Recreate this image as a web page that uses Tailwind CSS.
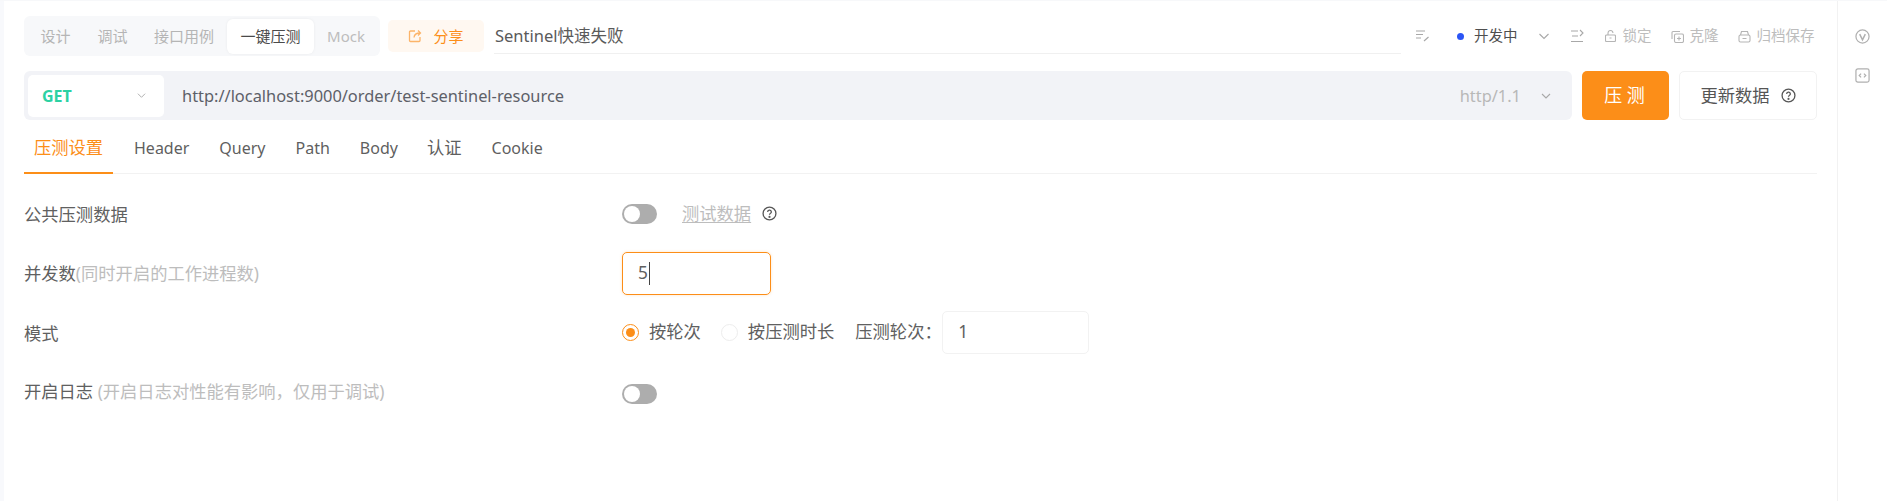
<!DOCTYPE html>
<html lang="zh">
<head>
<meta charset="utf-8">
<script src="https://cdn.jsdelivr.net/npm/@tailwindcss/browser@4"></script>
</head>
<body class="m-0 bg-white overflow-hidden font-['Noto_Sans','Noto_Sans_CJK_SC',sans-serif] text-[17.300px] text-[#606060]">
<div class="flex h-[501px] w-[1887px] border-t border-[#f7f8fa]">
  <div class="w-[4px] bg-[#f8f9fc]"></div>
  <main class="w-[1833px] pl-[20px] pr-[20px] pt-[15px]">
    <div class="flex h-[40px] items-center">
      <div class="flex h-[40px] w-[356px] items-center rounded-[6px] bg-[#f7f8fa] pl-[3px] text-[15px] text-[#b5b5b5]">
        <span class="w-[57px] text-center">设计</span>
        <span class="w-[57px] text-center">调试</span>
        <span class="w-[86px] text-center">接口用例</span>
        <span class="flex h-[35px] w-[87px] items-center justify-center rounded-[6px] bg-white text-[#4a4a4a] shadow-[0_0_3px_rgba(0,0,0,0.06)]">一键压测</span>
        <span class="w-[64px] text-center text-[#bdbdbd]">Mock</span>
      </div>
      <div class="ml-[8px] flex h-[32px] w-[96px] items-center justify-center gap-[11px] rounded-[5px] bg-[#fff8f1] text-[15px] text-[#fc8e18]">
        <svg class="h-[14px] w-[14px]" viewBox="0 0 14 14" fill="none" stroke="#fcb469" stroke-width="1.300"><path d="M7 2H2.500a1 1 0 0 0-1 1v8.500a1 1 0 0 0 1 1h8.500a1 1 0 0 0 1-1V8"/><path d="M6 8.500c.3-3 2-4.500 6-4.500M10 1.500 12.500 4 10 6.500"/></svg>
        <span>分享</span>
      </div>
      <div class="ml-[10px] flex h-[35px] w-[907px] items-center border-b border-[#f0f0f0] pl-[1px] pt-[2px] text-[16.500px] text-[#5a5a5a]">Sentinel快速失败</div>
      <div class="flex flex-1 items-center pl-[14px] text-[14.500px] text-[#bdbdbd]">
        <svg class="h-[14px] w-[15px]" viewBox="0 0 15 14" fill="none" stroke="#a8a8a8" stroke-width="1.200"><path d="M1 2h9M1 5.500h7M1 9h5M9 12l4.500-4"/></svg>
        <span class="ml-[27px] h-[7px] w-[7px] rounded-full bg-[#2b55f5]"></span>
        <span class="ml-[10px] text-[#4f4f4f]">开发中</span>
        <svg class="ml-[21px] h-[10px] w-[10px]" viewBox="0 0 10 10" fill="none" stroke="#a8a8a8" stroke-width="1.100"><path d="M.5 3 5 7.500 9.500 3"/></svg>
        <svg class="ml-[21px] h-[14px] w-[14px]" viewBox="0 0 14 14" fill="none" stroke="#a8a8a8" stroke-width="1.100"><path d="M1 2h7M2 7h6M1 12.500h12M10 1l3 3-3 3"/></svg>
        <svg class="ml-[21px] h-[12px] w-[11px]" viewBox="0 0 11 12" fill="none" stroke="#b5b5b5" stroke-width="1.100"><rect x=".5" y="5" width="10" height="6.500" rx="1"/><path d="M3 5V3a2.500 2.500 0 0 1 5 0M4.500 8h2"/></svg>
        <span class="ml-[7px]">锁定</span>
        <svg class="ml-[19px] h-[13px] w-[13px]" viewBox="0 0 13 13" fill="none" stroke="#b5b5b5" stroke-width="1.100"><path d="M9 1.500H2a1 1 0 0 0-1 1V9"/><rect x="3.500" y="4" width="9" height="8.500" rx="1.500"/><path d="M8 6.500v4M6 8.500h4"/></svg>
        <span class="ml-[6px]">克隆</span>
        <svg class="ml-[19px] h-[13px] w-[13px]" viewBox="0 0 13 13" fill="none" stroke="#b5b5b5" stroke-width="1.100"><rect x="1" y="5" width="11" height="7" rx="1.500"/><path d="M2.500 5l1-3.500h6l1 3.500M4.500 8.500h4"/></svg>
        <span class="ml-[6px]">归档保存</span>
      </div>
    </div>
    <div class="mt-[15px] flex h-[49px] items-center">
      <div class="flex h-[49px] w-[1548px] items-center rounded-[6px] bg-[#f2f3f7] pl-[4px] pr-[21px] text-[16.400px]">
        <div class="flex h-[42px] w-[136px] items-center justify-between rounded-[5px] bg-white pl-[14px] pr-[18px]">
          <span class="pt-px text-[16px] font-bold text-[#2cd1a3]">GET</span>
          <svg class="h-[9px] w-[9px]" viewBox="0 0 10 10" fill="none" stroke="#b0b0b0" stroke-width="1.100"><path d="M1 3l4 4 4-4"/></svg>
        </div>
        <span class="ml-[18px] flex-1 pt-[2px] text-[#5d6068]">http://localhost:9000/order/test-sentinel-resource</span>
        <span class="pt-[2px] text-[#b8b8b8]">http/1.1</span>
        <svg class="ml-[20px] h-[10px] w-[10px]" viewBox="0 0 10 10" fill="none" stroke="#a8a8a8" stroke-width="1.100"><path d="M1 3l4 4 4-4"/></svg>
      </div>
      <button class="ml-[10px] h-[49px] w-[87px] rounded-[5px] bg-[#fc8e18] pr-[2px] text-[18px] text-white">压 测</button>
      <div class="ml-[10px] flex h-[49px] w-[138px] items-center justify-center gap-[11px] rounded-[5px] border border-[#f2f2f2] text-[#555]">
        <span>更新数据</span>
        <svg class="h-[15px] w-[15px]" viewBox="0 0 14 14" fill="none" stroke="#555" stroke-width="1.200"><circle cx="7" cy="7" r="6"/><path d="M5.300 5.500a1.700 1.700 0 1 1 2.500 1.500c-.6.300-.8.600-.8 1.200"/><circle cx="7" cy="10.200" r=".4" fill="#555"/></svg>
      </div>
    </div>
    <div class="flex h-[54px] items-center gap-[30px] border-b border-[#f2f2f2] text-[16px] text-[#5f5f5f]">
      <span class="relative flex h-[53px] w-[89px] items-center justify-center pt-[2px] text-[17.300px] text-[#fc8e18]">压测设置<span class="absolute -bottom-px left-0 right-0 h-[2px] bg-[#fc8e18]"></span></span>
      <span class="-ml-[9px] pt-[2px]">Header</span>
      <span class="pt-[2px]">Query</span>
      <span class="pt-[2px]">Path</span>
      <span class="pt-[2px]">Body</span>
      <span class="-ml-px pt-[2px] text-[17.300px]">认证</span>
      <span class="pt-[2px]">Cookie</span>
    </div>
    <div class="mt-[10px]">
      <div class="flex h-[60px] items-center">
        <div class="w-[598px] pt-[2px]">公共压测数据</div>
        <span class="relative h-[20px] w-[35px] rounded-full bg-[#adadad]"><span class="absolute left-[2px] top-[2px] h-[16px] w-[16px] rounded-full bg-white"></span></span>
        <span class="ml-[25px] text-[#bdbdbd] underline underline-offset-2">测试数据</span>
        <svg class="ml-[11px] mb-[1px] h-[15px] w-[15px]" viewBox="0 0 14 14" fill="none" stroke="#555" stroke-width="1.200"><circle cx="7" cy="7" r="6"/><path d="M5.300 5.500a1.700 1.700 0 1 1 2.500 1.500c-.6.300-.8.600-.8 1.200"/><circle cx="7" cy="10.200" r=".4" fill="#555"/></svg>
      </div>
      <div class="flex h-[58px] items-center">
        <div class="w-[598px] pt-[2px]">并发数<span class="text-[#bdbdbd]">(同时开启的工作进程数)</span></div>
        <div class="flex h-[43px] w-[149px] items-center rounded-[5px] border border-[#fc8e18] pl-[15px] shadow-[0_0_3px_rgba(252,142,24,0.25)]">5<span class="ml-px h-[23px] w-px bg-[#444]"></span></div>
      </div>
      <div class="flex h-[60px] items-center">
        <div class="w-[598px] pt-[3px]">模式</div>
        <span class="flex h-[17px] w-[17px] items-center justify-center rounded-full border border-[#fc8e18]"><span class="h-[9px] w-[9px] rounded-full bg-[#fc8e18]"></span></span>
        <span class="ml-[10px]">按轮次</span>
        <span class="ml-[20px] h-[17px] w-[17px] rounded-full border border-[#ededed]"></span>
        <span class="ml-[10px]">按压测时长</span>
        <span class="ml-[21px] w-[87px] whitespace-nowrap">压测轮次：</span>
        <div class="flex h-[43px] w-[147px] items-center rounded-[5px] border border-[#f2f2f2] pl-[15px]">1</div>
      </div>
      <div class="flex h-[64px] items-center">
        <div class="w-[598px] pb-[4px]">开启日志 <span class="text-[#bdbdbd]">(开启日志对性能有影响，仅用于调试)</span></div>
        <span class="relative h-[20px] w-[35px] rounded-full bg-[#adadad]"><span class="absolute left-[2px] top-[2px] h-[16px] w-[16px] rounded-full bg-white"></span></span>
      </div>
    </div>
  </main>
  <aside class="flex w-[50px] flex-col items-center gap-[24px] border-l border-[#f2f2f2] pt-[28px]">
    <svg class="h-[15px] w-[15px]" viewBox="0 0 16 16" fill="none" stroke="#b0b0b0" stroke-width="1.300"><circle cx="8" cy="8" r="7"/><path d="M5 5.500l3 6 3-6" stroke-width="1.600"/></svg>
    <svg class="h-[15px] w-[15px]" viewBox="0 0 16 16" fill="none" stroke="#b0b0b0" stroke-width="1.300"><rect x="1" y="1" width="14" height="14" rx="2"/><path d="M6.500 6 4.500 8l2 2M9.500 6l2 2-2 2"/></svg>
  </aside>
</div>
</body>
</html>
